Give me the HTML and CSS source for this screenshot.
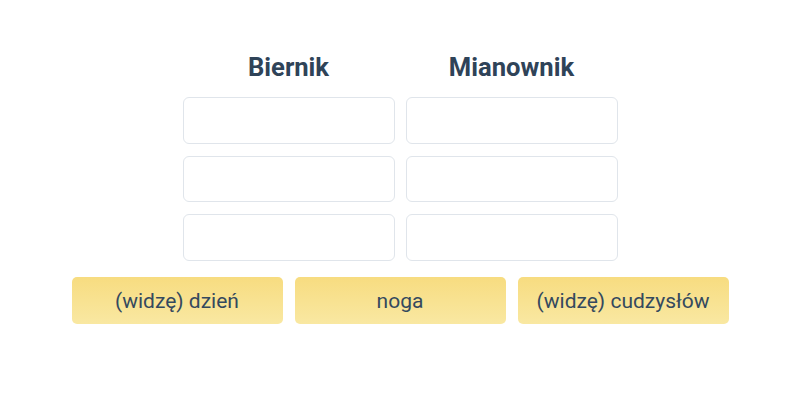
FILE: index.html
```html
<!DOCTYPE html>
<html lang="pl">
<head>
    <meta charset="UTF-8">
    <meta name="viewport" content="width=device-width, initial-scale=1.0">
    <title>Biernik i Mianownik</title>
    <link rel="stylesheet" href="styles.css">
</head>
<body>
    <div class="exercise">
        <div class="table">
            <h2 class="col-title">Biernik</h2>
            <h2 class="col-title">Mianownik</h2>

            <div class="slot"></div>
            <div class="slot"></div>
            <div class="slot"></div>
            <div class="slot"></div>
            <div class="slot"></div>
            <div class="slot"></div>
        </div>

        <div class="words">
            <button class="word">(widzę) dzień</button>
            <button class="word">noga</button>
            <button class="word">(widzę) cudzysłów</button>
        </div>
    </div>
</body>
</html>
```

FILE: styles.css
```css
body {
    margin: 0;
    font-family: Roboto, "Noto Sans", Arial, sans-serif;
    background: #ffffff;
    color: #34495e;
}
.exercise {
    padding-top: 52px;
    display: flex;
    flex-direction: column;
    align-items: center;
}
.table {
    display: grid;
    grid-template-columns: 212px 212px;
    column-gap: 11px;
    row-gap: 12px;
}
.col-title {
    margin: 0 0 3px 0;
    font-size: 25.6px;
    font-weight: 700;
    line-height: 30px;
    color: #2f4358;
    text-align: center;
}
.slot {
    height: 44.5px;
    background: #fff;
    border: 1px solid #e0e5eb;
    border-radius: 6px;
}
.words {
    display: flex;
    gap: 12px;
    margin-top: 16.5px;
}
.word {
    width: 211px;
    height: 47px;
    border: none;
    border-radius: 5px;
    background: linear-gradient(to bottom, #f7dc80, #f9e8a2);
    color: #34495e;
    font-family: inherit;
    font-size: 21px;
    cursor: pointer;
}
```
